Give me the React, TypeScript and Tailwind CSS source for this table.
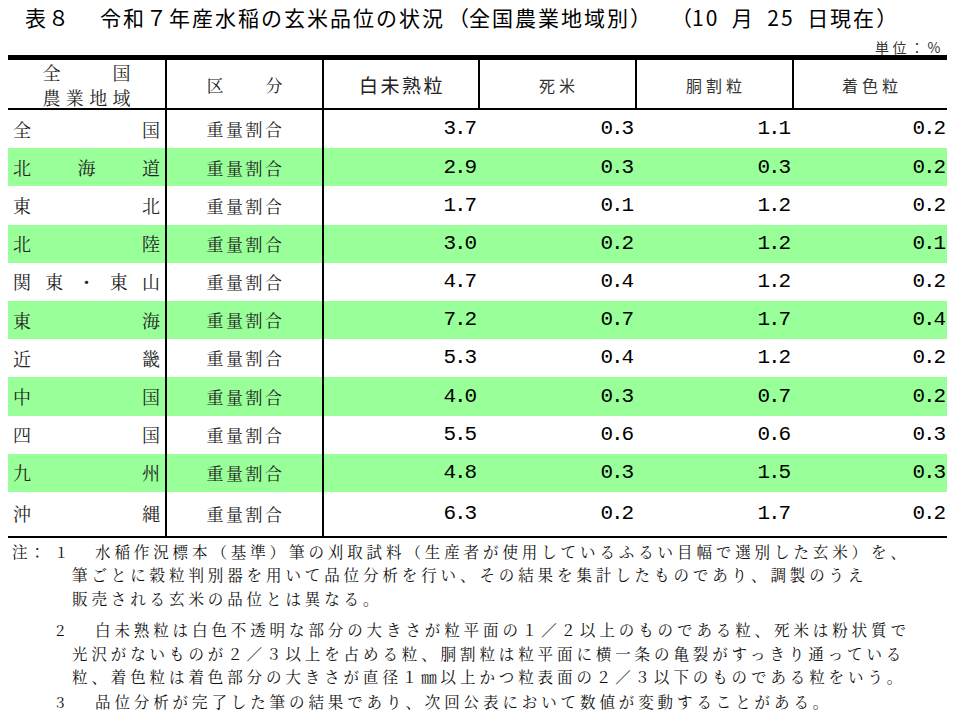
import React from "react";

type Row = { name: string[]; v: string[]; green: boolean; last?: boolean };

const rows: Row[] = [
  { name: ["全", "国"], v: ["3.7", "0.3", "1.1", "0.2"], green: false },
  { name: ["北", "海", "道"], v: ["2.9", "0.3", "0.3", "0.2"], green: true },
  { name: ["東", "北"], v: ["1.7", "0.1", "1.2", "0.2"], green: false },
  { name: ["北", "陸"], v: ["3.0", "0.2", "1.2", "0.1"], green: true },
  { name: ["関", "東", "・", "東", "山"], v: ["4.7", "0.4", "1.2", "0.2"], green: false },
  { name: ["東", "海"], v: ["7.2", "0.7", "1.7", "0.4"], green: true },
  { name: ["近", "畿"], v: ["5.3", "0.4", "1.2", "0.2"], green: false },
  { name: ["中", "国"], v: ["4.0", "0.3", "0.7", "0.2"], green: true },
  { name: ["四", "国"], v: ["5.5", "0.6", "0.6", "0.3"], green: false },
  { name: ["九", "州"], v: ["4.8", "0.3", "1.5", "0.3"], green: true },
  { name: ["沖", "縄"], v: ["6.3", "0.2", "1.7", "0.2"], green: false, last: true },
];

const serif = "font-['Noto_Serif_CJK_JP','Noto_Sans_CJK_JP',serif]";
const sans = "font-['Noto_Sans_CJK_JP',sans-serif]";
const grid = "grid grid-cols-[157px_157px_156px_157px_157px_155px]";

function Open() {
  return <span className="inline-block w-[24px] text-right tracking-normal">（</span>;
}
function Close() {
  return <span className="inline-block w-[24px] text-left tracking-normal">）</span>;
}

export default function App() {
  return (
    <div className="w-[960px] h-[718px] bg-white text-[#111] overflow-hidden [text-spacing-trim:space-all]">
      {/* Title */}
      <div className={`${sans} flex items-center h-[34px] pl-[25px] text-[21px] leading-[24px] tracking-[2px] text-black whitespace-nowrap`}>
        <span className="w-[75px] shrink-0">表８</span>
        <span>令和７年産水稲の玄米品位の状況</span>
        <Open />
        <span>全国農業地域別</span>
        <Close />
        <span className="inline-block w-[14px]"></span>
        <Open />
        <span>10{"\u2002"}月{"\u2002"}25{"\u2002"}日現在</span>
        <Close />
      </div>
      <div className={`${sans} flex justify-end items-center h-[21px] pr-[16px] pt-[5px] text-[14px] leading-[16px] tracking-[3.5px] text-[#333]`}>
        単位：%
      </div>

      {/* Table */}
      <div className="ml-[8px] w-[939px] border-t-[5px] border-b-2 border-black">
        {/* Header */}
        <div className={`${grid} h-[50px] border-b-2 border-black`}>
          <div className={`${serif} flex flex-col items-center justify-center text-[18px] leading-[25px] text-[#222]`}>
            <div className="flex justify-between w-[88px]">
              <span>全</span>
              <span>国</span>
            </div>
            <div className="flex justify-between w-[88px]">
              <span>農</span>
              <span>業</span>
              <span>地</span>
              <span>域</span>
            </div>
          </div>
          <div className={`${serif} border-l-2 border-black flex items-center justify-center text-[17px] text-[#222]`}>
            <div className="flex justify-between w-[76px]">
              <span>区</span>
              <span>分</span>
            </div>
          </div>
          <div className={`${sans} border-l-2 border-black flex items-center justify-center text-[19px] tracking-[2.5px] pl-[2px] text-[#222]`}>
            白未熟粒
          </div>
          <div className={`${sans} border-l-2 border-black flex items-center justify-center text-[16px] tracking-[4px] pl-[3px] text-[#333]`}>
            死米
          </div>
          <div className={`${sans} border-l-2 border-black flex items-center justify-center text-[16px] tracking-[4px] pl-[3px] text-[#333]`}>
            胴割粒
          </div>
          <div className={`${sans} border-l-2 border-black flex items-center justify-center text-[16px] tracking-[4px] pl-[3px] text-[#333]`}>
            着色粒
          </div>
        </div>

        {/* Body */}
        {rows.map((r, i) => (
          <div
            key={i}
            className={`${grid} ${r.last ? "h-[44px]" : "h-[38.2px]"} ${r.green ? "bg-[#99ff99]" : "bg-white"}`}
          >
            <div className={`${serif} flex items-center justify-between px-[5px] text-[18px] text-[#222]`}>
              {r.name.map((c, j) => (
                <span key={j}>{c}</span>
              ))}
            </div>
            <div className={`${serif} border-l-2 border-black flex items-center justify-center text-[17px] tracking-[2.5px] pl-[2px] text-[#222]`}>
              重量割合
            </div>
            {r.v.map((n, k) => (
              <div
                key={k}
                className={`${k === 0 ? "border-l-2 border-black" : ""} flex items-center justify-end pr-[3px] font-['Liberation_Mono',monospace] text-[21px] tracking-[-2.1px] text-black`}
              >
                {n}
              </div>
            ))}
          </div>
        ))}
      </div>

      {/* Notes */}
      <div className={`${serif} mt-[2px] text-[15.5px] leading-[23.5px] tracking-[3.9px] text-[#111]`}>
        <div className="flex pl-[12px]">
          <span className="w-[45px] shrink-0 tracking-[2px]">注：</span>
          <span className="w-[38px] shrink-0">1</span>
          <span className="whitespace-nowrap">水稲作況標本（基準）筆の刈取試料（生産者が使用しているふるい目幅で選別した玄米）を、</span>
        </div>
        <div className="pl-[72px] whitespace-nowrap">筆ごとに穀粒判別器を用いて品位分析を行い、その結果を集計したものであり、調製のうえ</div>
        <div className="pl-[72px] whitespace-nowrap">販売される玄米の品位とは異なる。</div>
        <div className="flex mt-[8px]">
          <span className="w-[56px] shrink-0"></span>
          <span className="w-[39px] shrink-0">2</span>
          <span className="whitespace-nowrap">白未熟粒は白色不透明な部分の大きさが粒平面の１／２以上のものである粒、死米は粉状質で</span>
        </div>
        <div className="pl-[72px] whitespace-nowrap">光沢がないものが２／３以上を占める粒、胴割粒は粒平面に横一条の亀裂がすっきり通っている</div>
        <div className="pl-[72px] whitespace-nowrap">粒、着色粒は着色部分の大きさが直径１㎜以上かつ粒表面の２／３以下のものである粒をいう。</div>
        <div className="flex mt-[1px]">
          <span className="w-[56px] shrink-0"></span>
          <span className="w-[39px] shrink-0">3</span>
          <span className="whitespace-nowrap">品位分析が完了した筆の結果であり、次回公表において数値が変動することがある。</span>
        </div>
      </div>
    </div>
  );
}
